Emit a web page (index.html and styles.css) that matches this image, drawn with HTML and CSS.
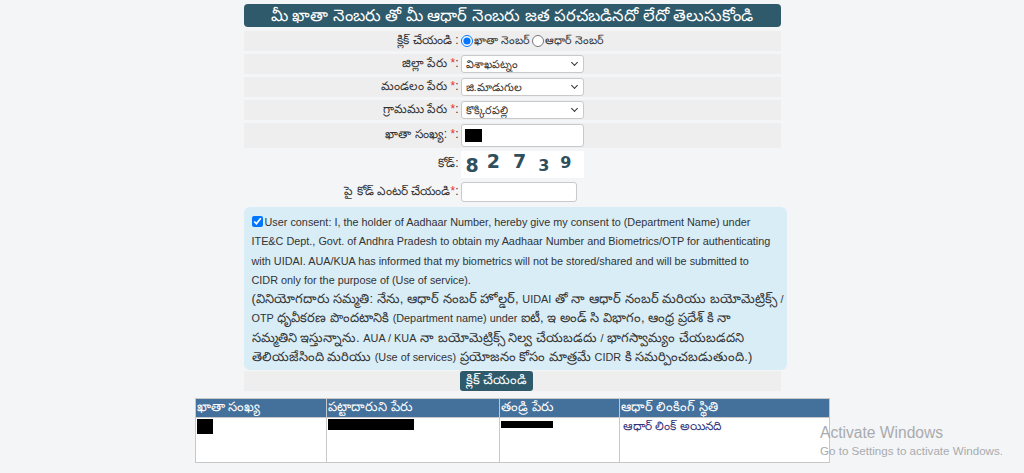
FILE: index.html
```html
<!DOCTYPE html>
<html lang="te">
<head>
<meta charset="utf-8">
<title>ఆధార్ లింకింగ్ స్థితి</title>
<link rel="stylesheet" href="styles.css">
</head>
<body>
<div class="page">
  <div class="panel">
    <h1 class="title">మీ ఖాతా నెంబరు తో మీ ఆధార్ నెంబరు జత పరచబడినదో లేదో తెలుసుకోండి</h1>

    <div class="row band">
      <div class="label">క్లిక్ చేయండి :</div>
      <div class="field radios">
        <label class="radio"><input type="radio" name="t" checked>ఖాతా నెంబర్</label>
        <label class="radio"><input type="radio" name="t">ఆధార్ నెంబర్</label>
      </div>
    </div>

    <div class="row band">
      <div class="label">జిల్లా పేరు <span class="req">*</span>:</div>
      <div class="field"><div class="select">విశాఖపట్నం<span class="chev"></span></div></div>
    </div>

    <div class="row band">
      <div class="label">మండలం పేరు <span class="req">*</span>:</div>
      <div class="field"><div class="select">జి.మాడుగుల<span class="chev"></span></div></div>
    </div>

    <div class="row band">
      <div class="label">గ్రామము పేరు <span class="req">*</span>:</div>
      <div class="field"><div class="select">కొక్కిరపల్లి<span class="chev"></span></div></div>
    </div>

    <div class="row band r5">
      <div class="label">ఖాతా సంఖ్య: <span class="req">*</span>:</div>
      <div class="field"><div class="textbox"><span class="redact r-khata"></span></div></div>
    </div>

    <div class="row r6">
      <div class="label">కోడ్:</div>
      <div class="field">
        <div class="captcha">
          <span class="d d1">8</span><span class="d d2">2</span><span class="d d3">7</span><span class="d d4">3</span><span class="d d5">9</span>
        </div>
      </div>
    </div>

    <div class="row r7">
      <div class="label">పై కోడ్ ఎంటర్ చేయండి<span class="req">*</span>:</div>
      <div class="field"><div class="textbox short"></div></div>
    </div>

    <div class="consent">
      <p class="en-p"><input type="checkbox" class="chk" checked>User consent: I, the holder of Aadhaar Number, hereby give my consent to (Department Name) under<br>ITE&amp;C Dept., Govt. of Andhra Pradesh to obtain my Aadhaar Number and Biometrics/OTP for authenticating<br>with UIDAI. AUA/KUA has informed that my biometrics will not be stored/shared and will be submitted to<br>CIDR only for the purpose of (Use of service).</p>
      <p class="te-p">(వినియోగదారు సమ్మతి: నేను, ఆధార్ నంబర్ హోల్డర్, <span class="en">UIDAI</span> తో నా ఆధార్ నంబర్ మరియు బయోమెట్రిక్స్ <span class="en">/</span><br><span class="en">OTP</span> ధృవీకరణ పొందటానికి <span class="en">(Department name) under</span> ఐటీ, ఇ అండ్ సి విభాగం, ఆంధ్ర ప్రదేశ్ కి నా<br>సమ్మతిని ఇస్తున్నాను. <span class="en">AUA / KUA</span> నా బయోమెట్రిక్స్ నిల్వ చేయబడదు <span class="en">/</span> భాగస్వామ్యం చేయబడదని<br>తెలియజేసింది మరియు <span class="en">(Use of services)</span> ప్రయోజనం కోసం మాత్రమే <span class="en">CIDR</span> కి సమర్పించబడుతుంది.)</p>
    </div>

    <div class="actions">
      <button class="btn" type="button">క్లిక్ చేయండి</button>
    </div>
  </div>

  <table class="result">
    <thead>
      <tr>
        <th class="c1">ఖాతా సంఖ్య</th>
        <th class="c2">పట్టాదారుని పేరు</th>
        <th class="c3">తండ్రి పేరు</th>
        <th class="c4">ఆధార్ లింకింగ్ స్థితి</th>
      </tr>
    </thead>
    <tbody>
      <tr>
        <td><span class="redact r-t1"></span></td>
        <td><span class="redact r-t2"></span></td>
        <td><span class="redact r-t3"></span></td>
        <td class="status">ఆధార్ లింక్ అయినది</td>
      </tr>
    </tbody>
  </table>
</div>

<div class="watermark">
  <div class="wm1">Activate Windows</div>
  <div class="wm2">Go to Settings to activate Windows.</div>
</div>
</body>
</html>
```

FILE: styles.css
```css
* { box-sizing: border-box; }

html, body {
  margin: 0;
  padding: 0;
}

body {
  background: #f4f5f7;
  font-family: "Liberation Sans", "Noto Sans", sans-serif;
  color: #333;
  width: 1024px;
  height: 473px;
  overflow: hidden;
  position: relative;
}

.page {
  padding-top: 4px;
}

.panel {
  width: 537px;
  margin: 0 auto;
}

.title {
  margin: 0;
  height: 23px;
  line-height: 23px;
  background: #2e5a6b;
  color: #fff;
  font-size: 16.4px;
  font-weight: normal;
  text-align: center;
  border-radius: 4px;
  white-space: nowrap;
  overflow: hidden;
}

.row {
  display: flex;
  align-items: center;
  font-size: 12px;
  margin-top: 3px;
  height: 20px;
}

.row:first-of-type { margin-top: 4px; }

.band { background: #eeeeef; }

.r5 { height: 25px; }
.r6 { height: 29px; margin-top: 2px; }
.r7 { height: 22px; margin-top: 2px; }

.label {
  width: 217px;
  text-align: right;
  padding-right: 2px;
  white-space: nowrap;
  color: #333;
}

.req { color: #e03030; }

.field {
  display: flex;
  align-items: center;
}

.radios { font-size: 11px; }

.radio {
  display: inline-flex;
  align-items: center;
  margin-right: 2px;
}

.radio input {
  margin: 0 1px 0 0;
  width: 12px;
  height: 12px;
}

.select {
  position: relative;
  width: 123px;
  height: 18px;
  background: #fff;
  border: 1px solid #c9c9c9;
  border-radius: 3px;
  font-size: 11px;
  line-height: 16px;
  padding-left: 4px;
}

.chev {
  position: absolute;
  right: 6px;
  top: 4px;
  width: 5px;
  height: 5px;
  border-right: 1.6px solid #333;
  border-bottom: 1.6px solid #333;
  transform: rotate(45deg);
}

.textbox {
  width: 123px;
  height: 23px;
  background: #fff;
  border: 1px solid #c9c9c9;
  border-radius: 3px;
  display: flex;
  align-items: center;
  padding-left: 3px;
}

.textbox.short {
  width: 116px;
  height: 20px;
}

.redact {
  display: block;
  background: #000;
}

.r-khata { width: 17px; height: 13px; }

.captcha {
  width: 123px;
  height: 27px;
  background: #fff;
  display: flex;
  align-items: flex-start;
  padding-left: 5px;
  font-family: "DejaVu Sans", sans-serif;
  font-weight: bold;
  font-size: 19px;
  line-height: 1;
  color: #2f4f5c;
}

.d { display: block; }
.d1 { margin-top: 5px; margin-right: 8px; }
.d2 { margin-top: 1px; margin-right: 13px; }
.d3 { margin-top: 1px; margin-right: 12px; }
.d4 { margin-top: 7px; margin-right: 11px; font-size: 16px; }
.d5 { margin-top: 4px; font-size: 16px; }

.consent {
  width: 543px;
  margin-top: 4px;
  background: #d9edf7;
  border-radius: 6px;
  padding: 6px 6px 4px 8px;
  line-height: 19.3px;
  color: #333;
}

.consent p {
  margin: 0;
  white-space: nowrap;
}

.en-p { font-size: 10.85px; }

.te-p {
  font-size: 13px;
  margin-top: -1px !important;
}

.en {
  font-size: 10.85px;
  line-height: 1;
}

.chk {
  margin: 0 2px 0 0;
  width: 11px;
  height: 11px;
  vertical-align: -1px;
}

.actions {
  background: #eeeeef;
  height: 20px;
  display: flex;
  align-items: center;
  padding-left: 216px;
  margin-top: 1px;
}

.btn {
  background: #2e5a6b;
  color: #fff;
  border: 0;
  border-radius: 3px;
  height: 20px;
  padding: 0 6px;
  font-family: "Liberation Sans", sans-serif;
  font-size: 13px;
}

.result {
  width: 635px;
  margin: 7px auto 0;
  border-collapse: collapse;
  background: #fff;
  font-size: 12px;
}

.result th {
  background: #44709c;
  color: #fff;
  font-weight: normal;
  text-align: left;
  height: 19px;
  padding: 0 1px;
  border: 1px solid #c8c8c8;
  font-size: 13px;
}

.result td {
  height: 45px;
  vertical-align: top;
  padding: 1px;
  border: 1px solid #c8c8c8;
}

.c1 { width: 132px; }
.c2 { width: 173px; }
.c3 { width: 120px; }
.c4 { width: 210px; }

.r-t1 { width: 16px; height: 15px; }
.r-t2 { width: 86px; height: 11px; }
.r-t3 { width: 52px; height: 7px; margin-top: 2px; }

.status {
  color: #35357a;
  font-size: 12px;
  padding-left: 3px !important;
}

.watermark {
  position: absolute;
  left: 820px;
  top: 424px;
  color: #a9abae;
  font-family: "Liberation Sans", sans-serif;
}

.wm1 { font-size: 15.6px; line-height: 18px; }
.wm2 { font-size: 11.6px; line-height: 18px; }
```
